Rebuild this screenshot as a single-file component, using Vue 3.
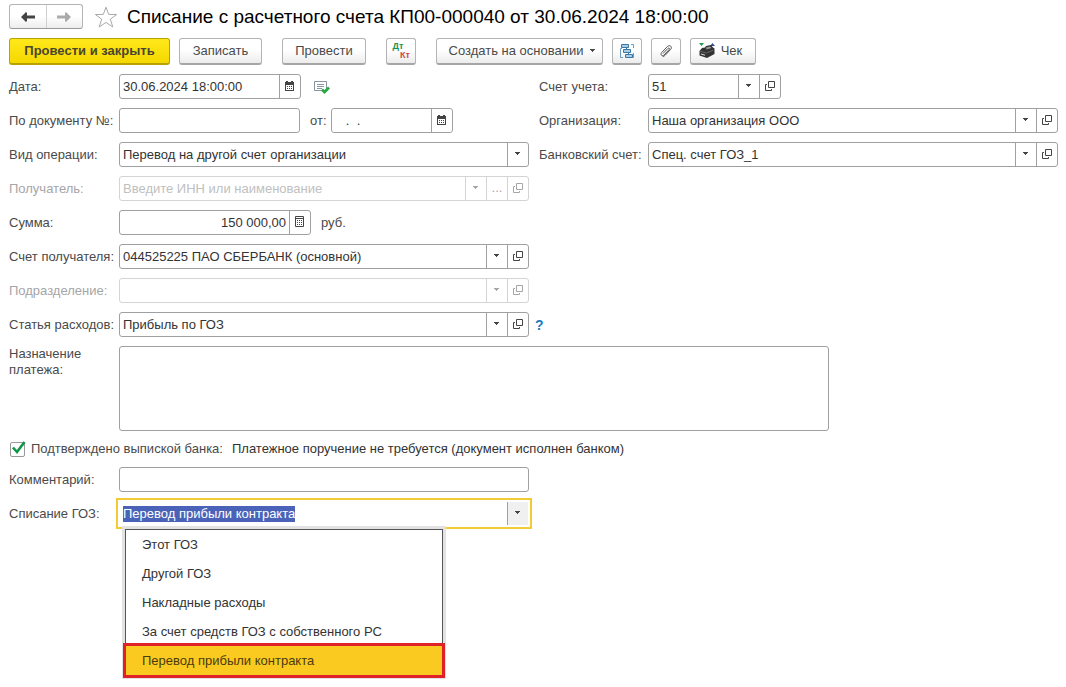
<script setup>
import { ref, onMounted } from 'vue'

const docDate = ref('30.06.2024 18:00:00')
const docNumber = ref('')
const docNumberDate = ref('   .  .')
const operation = ref('Перевод на другой счет организации')
const amount = ref('150 000,00')
const payeeAccount = ref('044525225 ПАО СБЕРБАНК (основной)')
const expenseItem = ref('Прибыль по ГОЗ')
const purpose = ref('')
const confirmed = ref(true)
const comment = ref('')
const ledger = ref('51')
const organization = ref('Наша организация ООО')
const bankAccount = ref('Спец. счет ГОЗ_1')
const writeOff = ref('Перевод прибыли контракта')
const writeOffInput = ref(null)

const options = [
  'Этот ГОЗ',
  'Другой ГОЗ',
  'Накладные расходы',
  'За счет средств ГОЗ с собственного РС',
  'Перевод прибыли контракта',
]

onMounted(() => {
  writeOffInput.value.focus()
  writeOffInput.value.select()
})
</script>

<template>
  <svg class="defs" width="0" height="0" aria-hidden="true">
    <symbol id="i-drop" viewBox="0 0 6 4"><path d="M0 0h5v1H4v1H3v1H2V2H1V1H0z" fill="currentColor" /></symbol>
    <symbol id="i-open" viewBox="0 0 10 10">
      <path d="M3.500.5h6v6h-6z M2 3.500H.5v6h6V8" fill="none" stroke="currentColor" />
    </symbol>
    <symbol id="i-cal" viewBox="0 0 10 10">
      <path d="M0 1h1V0h2v1h3V0h2v1h1v9H0z M1 4v5h7V4z" fill="currentColor" fill-rule="evenodd" />
      <path d="M2 5h1v1H2z M4 5h1v1H4z M6 5h1v1H6z M2 7h1v1H2z M4 7h1v1H4z M6 7h1v1H6z" fill="currentColor" />
    </symbol>
    <symbol id="i-calc" viewBox="0 0 10 12">
      <path d="M.5.5h8v10h-8z M0 2.500h9" fill="none" stroke="currentColor" />
      <path d="M2 4h1v1H2z M4 4h1v1H4z M6 4h1v1H6z M2 6h1v1H2z M4 6h1v1H4z M6 6h1v1H6z M2 8h1v1H2z M4 8h1v1H4z M6 8h1v1H6z" fill="currentColor" />
    </symbol>
  </svg>

  <main class="page">
    <header class="head">
      <div class="nav">
        <button type="button" aria-label="Назад">
          <svg width="14" height="10" viewBox="0 0 14 10"><path d="M0 5l5-5 1 1v2.500h8v3H6V9l-1 1z" fill="#444" /></svg>
        </button>
        <button type="button" aria-label="Вперед">
          <svg width="14" height="10" viewBox="0 0 14 10"><path d="M14 5L9 0 8 1v2.500H0v3h8V9l1 1z" fill="#aaa" /></svg>
        </button>
      </div>
      <button type="button" class="star" aria-label="В избранное">
        <svg width="24" height="22" viewBox="0 0 24 22">
          <path d="M12 1.200l2.700 7.200 8 .1-6.400 4.700 2.500 7.800-6.800-4.600L5.200 21l2.500-7.800L1.300 8.500l8-.1z" fill="#fff" stroke="#aaa" />
        </svg>
      </button>
      <h1>Списание с расчетного счета КП00-000040 от 30.06.2024 18:00:00</h1>
    </header>

    <div class="toolbar">
      <button type="button" class="btn primary">Провести и закрыть</button>
      <button type="button" class="btn write">Записать</button>
      <button type="button" class="btn post">Провести</button>
      <button type="button" class="btn sq entries" aria-label="Проводки">
        <span class="dt">Дт</span><span class="kt">Кт</span>
      </button>
      <button type="button" class="btn create">Создать на основании
        <svg class="drop" width="6" height="4"><use href="#i-drop" /></svg>
      </button>
      <button type="button" class="btn sq" aria-label="Структура подчиненности">
        <svg width="16" height="16" viewBox="0 0 16 16" fill="none">
          <path d="M3 5.500H1.500V14.500H4 M12 1.500h2.500V5 M14.500 10v4.500H13" stroke="#6a9cc0" />
          <path d="M2.500 1.500h7v3h-7z M4.500 6.500h7v3h-7z M6.500 11.500h7v3h-7z" fill="#a9cbe4" stroke="#3a78a8" />
          <path d="M7.500 4.500v2 M9.500 9.500v2" stroke="#3a78a8" />
        </svg>
      </button>
      <button type="button" class="btn sq" aria-label="Вложения">
        <svg width="14" height="14" viewBox="0 0 14 14">
          <path d="M4.300 9.200l4.500-4.700c1.200-1.200 2.400 0 1.300 1.200l-5 5.300c-1.900 1.900-4.300-.4-2.500-2.400l5.700-6c2.500-2.500 5.600.5 3.200 3l-5.400 5.700c-.6.600-1.200 1-2 1.200" fill="none" stroke="#555" stroke-linecap="round" />
        </svg>
      </button>
      <button type="button" class="btn receipt">
        <svg width="18" height="16" viewBox="0 0 18 16">
          <path d="M1 0h5L3.500 3z" fill="#1d9a50" />
          <path d="M12 3h5l-2.500-3z" fill="#2f4f9a" />
          <path d="M4 5l3-.5L8 3l5-1 2 2.500 1.500 1V11L9 15l-7.500-2.500V8z" fill="#333" />
          <path d="M8 4.500l4-1 1.500 1.500-5 1.500z" fill="#999" />
          <path d="M2.500 8.500l6 1.500 7-3" fill="none" stroke="#666" />
          <path d="M3 11l4 1.200" stroke="#ddd" />
        </svg>
        Чек
      </button>
    </div>

    <form class="form" @submit.prevent>
      <div class="columns">
        <div class="col">
          <div class="row">
            <label for="date">Дата:</label>
            <div class="line">
              <div class="field w-date">
                <input id="date" v-model="docDate" type="text">
                <button type="button" aria-label="Выбрать дату"><svg width="10" height="10"><use href="#i-cal" /></svg></button>
              </div>
              <svg class="status" width="16" height="14" viewBox="0 0 16 14">
                <path d="M.5 1.500h12v9H.5z" fill="#fff" stroke="#8894a4" />
                <path d="M3 4.500h7 M3 6.500h7 M3 8.500h5" stroke="#8894a4" />
                <path d="M8 9.500l2.500 2.500L15 7.500" fill="none" stroke="#28a745" stroke-width="2.800" />
              </svg>
            </div>
          </div>
          <div class="row">
            <label for="num">По документу №:</label>
            <div class="line">
              <div class="field w-num"><input id="num" v-model="docNumber" type="text"></div>
              <label class="from" for="numdate">от:</label>
              <div class="field w-numdate">
                <input id="numdate" v-model="docNumberDate" type="text">
                <button type="button" aria-label="Выбрать дату"><svg width="10" height="10"><use href="#i-cal" /></svg></button>
              </div>
            </div>
          </div>
          <div class="row">
            <label for="op">Вид операции:</label>
            <div class="field">
              <select id="op" v-model="operation"><option>Перевод на другой счет организации</option></select>
              <span class="cell"><svg width="6" height="4"><use href="#i-drop" /></svg></span>
            </div>
          </div>
          <div class="row off">
            <label for="payee">Получатель:</label>
            <div class="field">
              <input id="payee" type="text" placeholder="Введите ИНН или наименование" disabled>
              <button type="button" disabled aria-label="Список"><svg width="6" height="4"><use href="#i-drop" /></svg></button>
              <button type="button" disabled>...</button>
              <button type="button" disabled aria-label="Открыть"><svg width="10" height="10"><use href="#i-open" /></svg></button>
            </div>
          </div>
          <div class="row">
            <label for="sum">Сумма:</label>
            <div class="line">
              <div class="field w-sum">
                <input id="sum" v-model="amount" class="num" type="text">
                <button type="button" aria-label="Калькулятор"><svg width="10" height="12"><use href="#i-calc" /></svg></button>
              </div>
              <span class="unit">руб.</span>
            </div>
          </div>
          <div class="row">
            <label for="acc">Счет получателя:</label>
            <div class="field">
              <input id="acc" v-model="payeeAccount" type="text">
              <button type="button" aria-label="Список"><svg width="6" height="4"><use href="#i-drop" /></svg></button>
              <button type="button" aria-label="Открыть"><svg width="10" height="10"><use href="#i-open" /></svg></button>
            </div>
          </div>
          <div class="row off">
            <label for="dep">Подразделение:</label>
            <div class="field">
              <input id="dep" type="text" disabled>
              <button type="button" disabled aria-label="Список"><svg width="6" height="4"><use href="#i-drop" /></svg></button>
              <button type="button" disabled aria-label="Открыть"><svg width="10" height="10"><use href="#i-open" /></svg></button>
            </div>
          </div>
          <div class="row">
            <label for="item">Статья расходов:</label>
            <div class="field">
              <input id="item" v-model="expenseItem" type="text">
              <button type="button" aria-label="Список"><svg width="6" height="4"><use href="#i-drop" /></svg></button>
              <button type="button" aria-label="Открыть"><svg width="10" height="10"><use href="#i-open" /></svg></button>
            </div>
            <a class="help" href="#help">?</a>
          </div>
        </div>

        <div class="col">
          <div class="row right">
            <label for="ledger">Счет учета:</label>
            <div class="field w-ledger">
              <input id="ledger" v-model="ledger" type="text">
              <button type="button" aria-label="Список"><svg width="6" height="4"><use href="#i-drop" /></svg></button>
              <button type="button" aria-label="Открыть"><svg width="10" height="10"><use href="#i-open" /></svg></button>
            </div>
          </div>
          <div class="row right">
            <label for="org">Организация:</label>
            <div class="field">
              <input id="org" v-model="organization" type="text">
              <button type="button" aria-label="Список"><svg width="6" height="4"><use href="#i-drop" /></svg></button>
              <button type="button" aria-label="Открыть"><svg width="10" height="10"><use href="#i-open" /></svg></button>
            </div>
          </div>
          <div class="row right">
            <label for="bank">Банковский счет:</label>
            <div class="field">
              <input id="bank" v-model="bankAccount" type="text">
              <button type="button" aria-label="Список"><svg width="6" height="4"><use href="#i-drop" /></svg></button>
              <button type="button" aria-label="Открыть"><svg width="10" height="10"><use href="#i-open" /></svg></button>
            </div>
          </div>
        </div>
      </div>

      <div class="row purpose">
        <label for="purpose">Назначение<br>платежа:</label>
        <textarea id="purpose" v-model="purpose"></textarea>
      </div>

      <div class="confirm">
        <span class="check">
          <input id="ok" v-model="confirmed" type="checkbox">
          <svg v-if="confirmed" width="16" height="16" viewBox="0 0 16 16"><path d="M3 6.500l4 4.500 7.500-10" fill="none" stroke="#109648" stroke-width="2.600" /></svg>
        </span>
        <label for="ok">Подтверждено выпиской банка:</label>
        <span class="note">Платежное поручение не требуется (документ исполнен банком)</span>
      </div>

      <div class="columns">
        <div class="col">
          <div class="row">
            <label for="comment">Комментарий:</label>
            <div class="field"><input id="comment" v-model="comment" type="text"></div>
          </div>
          <div class="row">
            <label for="goz">Списание ГОЗ:</label>
            <div class="field active">
              <input id="goz" ref="writeOffInput" v-model="writeOff" type="text" role="combobox" aria-expanded="true" aria-controls="goz-list">
              <button type="button" aria-label="Список"><svg width="6" height="4"><use href="#i-drop" /></svg></button>
              <ul id="goz-list" class="menu" role="listbox">
                <li v-for="o in options" :key="o" role="option" :aria-selected="o === writeOff" :class="{ chosen: o === writeOff }" @click="writeOff = o">{{ o }}</li>
              </ul>
            </div>
          </div>
        </div>
      </div>
    </form>
  </main>
</template>

<style>
body { margin: 0; background: #fff; }
</style>

<style scoped>
* { box-sizing: border-box; }
.defs { position: absolute; }
.page {
  min-height: 100vh;
  padding: 4px 8px 10px 9px;
  font: 13px/16px "Liberation Sans", Arial, sans-serif;
  color: #4a4a4a;
}
button, input, select, textarea { font: inherit; color: inherit; margin: 0; }
button { padding: 0; cursor: pointer; }
svg { display: block; flex: none; }

.head { display: flex; align-items: center; height: 25px; }
.nav { display: flex; width: 74px; height: 25px; border: 1px solid #b4b4b4; border-bottom-color: #999; border-radius: 3px; background: linear-gradient(#fff 50%, #ededed); }
.nav button { flex: 1; display: flex; align-items: center; justify-content: center; border: 0; background: none; }
.nav button + button { border-left: 1px solid #d0d0d0; }
.star { margin-left: 11px; border: 0; background: none; }
h1 { margin: 0 0 0 9px; font-size: 19px; line-height: 24px; font-weight: 400; color: #000; white-space: nowrap; }

.toolbar { display: flex; gap: 9px; margin-top: 9px; }
.btn {
  display: flex; align-items: center; justify-content: center; height: 27px; white-space: nowrap;
  border: 1px solid #b4b4b4; border-bottom: 2px solid #a6a6a6; border-radius: 3px;
  background: linear-gradient(#fff 45%, #ececec);
}
.primary { width: 161px; font-weight: 700; border-color: #b8a200; background: linear-gradient(#ffe81a, #f5d800); color: #4a4530; }
.write { width: 83px; }
.post { width: 84px; margin-left: 11px; }
.sq { width: 30px; }
.entries { flex-direction: column; margin: 0 11px; font: 700 9px/9px "Liberation Sans", Arial, sans-serif; }
.dt { color: #109650; padding-right: 6px; }
.kt { color: #d04a40; padding-left: 8px; }
.create { width: 167px; padding-left: 6px; }
.drop { margin-left: 7px; }
.receipt { width: 66px; gap: 5px; padding-right: 6px; }

.form { margin-top: 9px; display: flex; flex-direction: column; gap: 9px; }
.columns { display: grid; grid-template-columns: 530fr 519fr; }
.col { display: flex; flex-direction: column; gap: 9px; min-width: 0; }
.row { display: grid; grid-template-columns: 110px minmax(0, 1fr) 10px; align-items: center; }
.row.right { grid-template-columns: 109px minmax(0, 1fr); }
.row label { white-space: nowrap; }
.line { display: flex; align-items: center; }

.field { position: relative; display: flex; height: 25px; border: 1px solid #a0a0a0; border-radius: 3px; background: #fff; color: #333; }
.field input, .field select { flex: 1; min-width: 0; width: 100%; padding: 0 3px; border: 0; outline: 0; background: none; line-height: 16px; }
.field select { appearance: none; }
.field button, .cell { display: flex; flex: none; align-items: center; justify-content: center; width: 21px; padding: 0 0 1px; border: 0; border-left: 1px solid #a0a0a0; background: none; color: #444; }
.cell { pointer-events: none; }
.field .num { text-align: right; }
.w-date { width: 182px; }
.w-num { width: 181px; }
.w-numdate { width: 122px; }
.w-sum { width: 192px; }
.w-ledger { width: 133px; }
.status { margin-left: 13px; }
.from { width: 31px; padding-left: 10px; }
.unit { margin-left: 10px; }
.off { color: #a6a6a6; }
.off .field { border-color: #d4d4d4; }
.off .field button { border-color: #d4d4d4; color: #a6a6a6; }
.off input::placeholder { color: #c0c0c0; opacity: 1; }
.help { padding-left: 6px; color: #1a7cc0; font-size: 14px; font-weight: 700; text-decoration: none; }

.purpose { grid-template-columns: 110px minmax(0, 710px); align-items: start; }
textarea { display: block; width: 100%; height: 85px; padding: 3px; border: 1px solid #a0a0a0; border-radius: 3px; outline: 0; resize: none; }
.confirm { display: flex; align-items: center; height: 18px; }
.check { position: relative; width: 17px; height: 16px; margin-right: 5px; }
.check input { display: block; appearance: none; width: 15px; height: 15px; margin: 1px; border: 1px solid #999; border-radius: 2px; }
.check svg { position: absolute; left: 1px; top: 0; pointer-events: none; }
.note { margin-left: 9px; color: #333; }

.active { border-color: #fff; box-shadow: 0 0 0 1px #fff, 0 0 0 3px #f2cb35; border-radius: 0; }
.active button { background: #f0f0f0; }
.active input::selection { background: #4a63b8; color: #fff; }
.menu {
  position: absolute; z-index: 2; top: 27px; left: 5px; width: 318px; margin: 0; padding: 0; list-style: none;
  border: 1px solid #555; background: #fff; box-shadow: 0 0 0 3px #e2e2e2;
}
.menu li { height: 29px; padding-left: 16px; line-height: 29px; cursor: pointer; }
.menu .chosen { background: #fbca20; color: #4a3c10; box-shadow: 0 0 0 3px #de2228; }
</style>
